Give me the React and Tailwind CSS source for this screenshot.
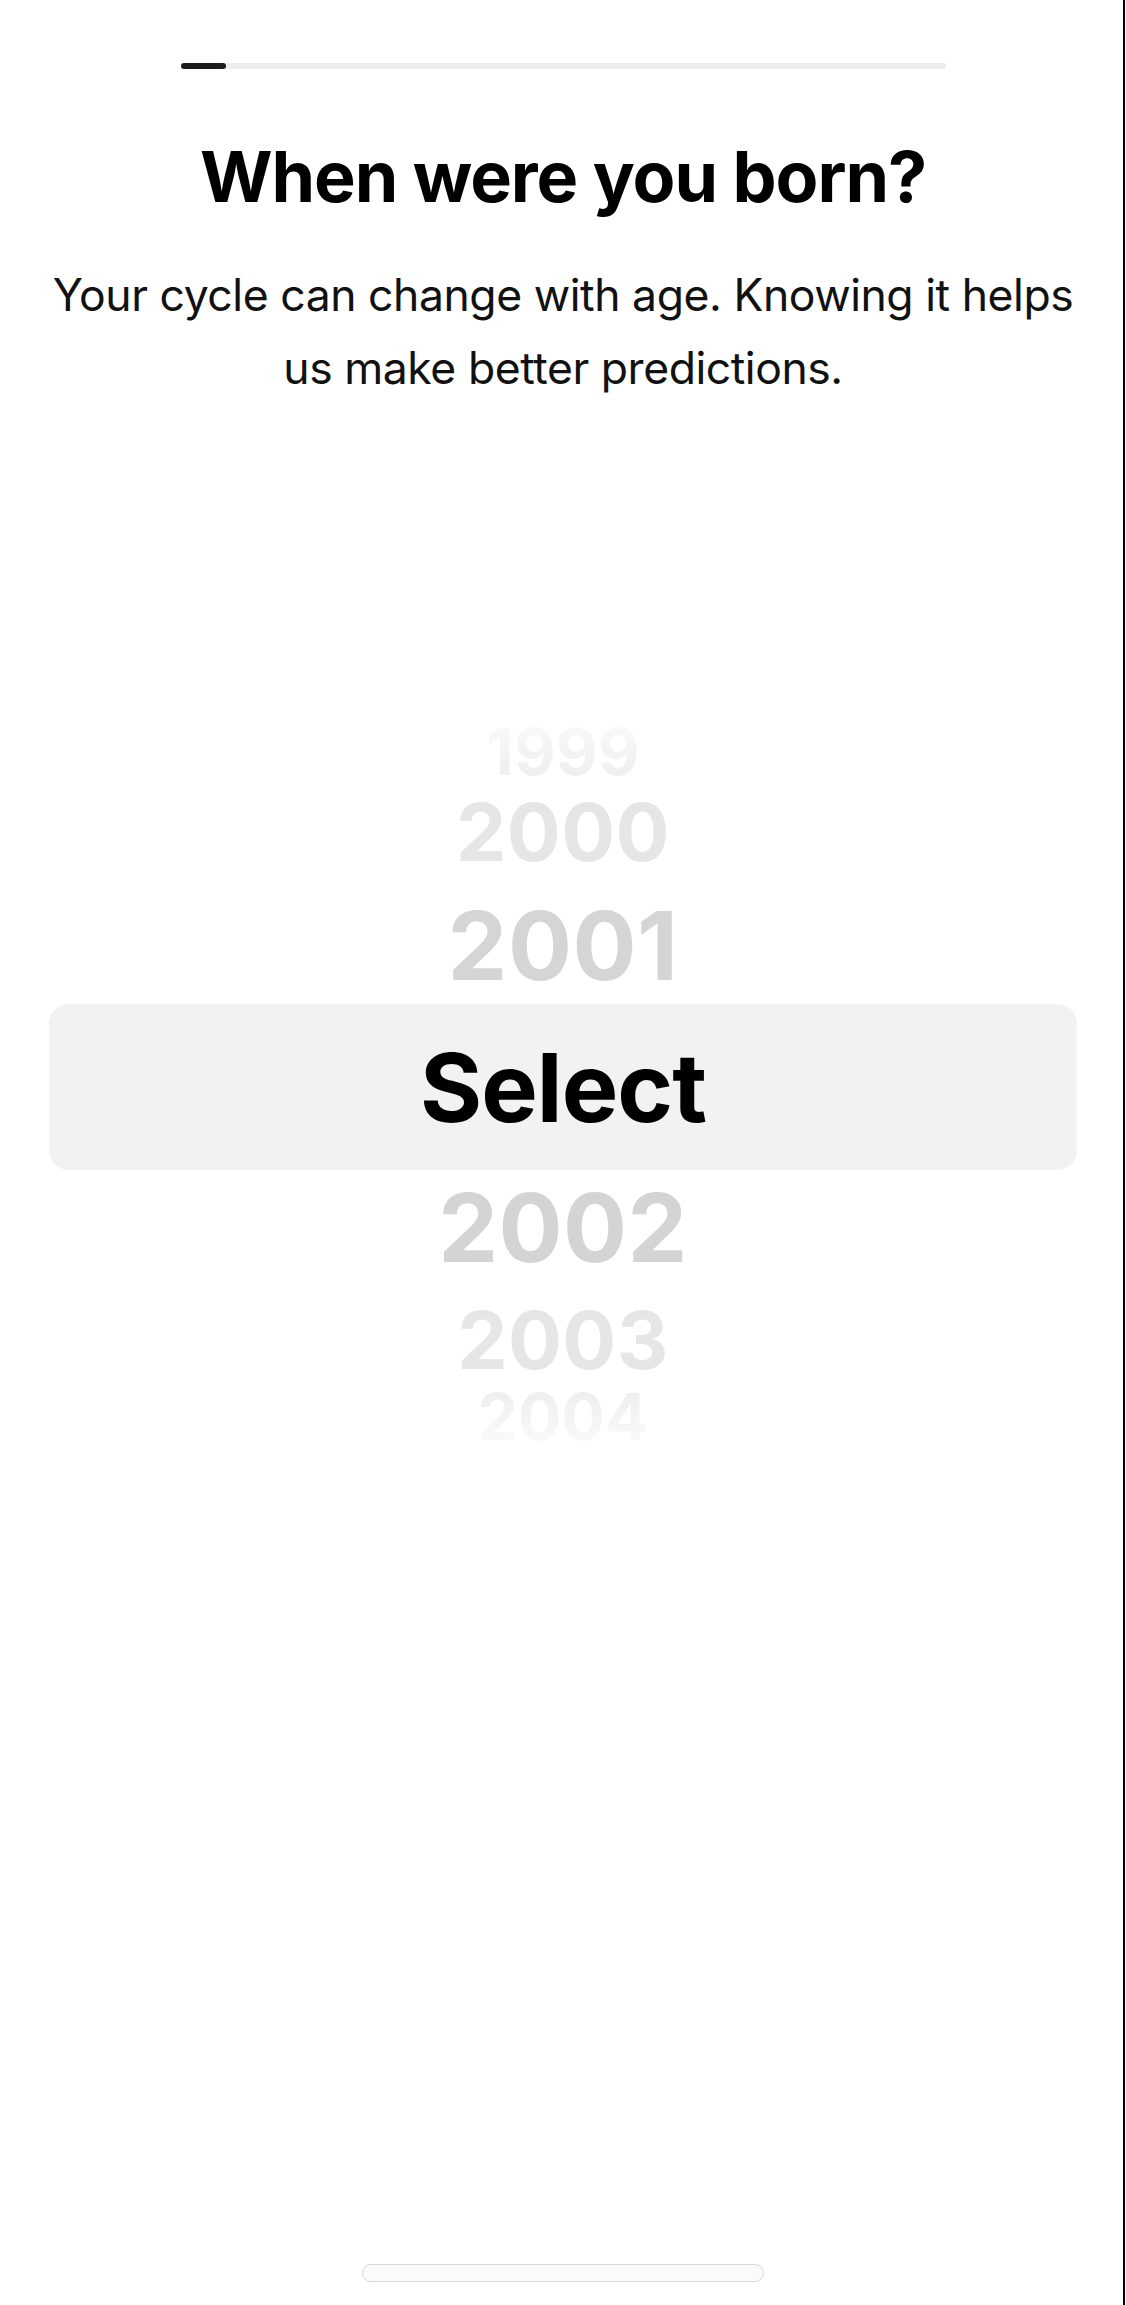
import React from 'react';

// Year wheel: rows above and below the highlighted "Select" row
const above = [
    { year: '1999', size: 'text-[64px]', color: 'bg-gradient-to-b from-[#fafafa] to-[#ededef] bg-clip-text text-transparent', mt: 'mt-0' },
    { year: '2000', size: 'text-[80px]', color: 'text-[#e6e6e8]', mt: 'mt-[8px]' },
    { year: '2001', size: 'text-[95px]', color: 'text-[#d5d5d8]', mt: 'mt-[26px]' },
];

const below = [
    { year: '2002', size: 'text-[95px]', color: 'text-[#d4d4d6]', mt: 'mt-[10px]' },
    { year: '2003', size: 'text-[80px]', color: 'text-[#e6e6e8]', mt: 'mt-[25px]' },
    { year: '2004', size: 'text-[64px]', color: 'bg-gradient-to-b from-[#ededef] to-[#fbfbfb] bg-clip-text text-transparent', mt: 'mt-[5px]' },
];

const YearRow = ({ year, size, color, mt }) => (
    <div className={`${mt} ${size} ${color} leading-none font-bold text-center tracking-[0.005em]`}>
        {year}
    </div>
);

const App = () => {
    return (
        <div className="relative min-h-[2305px] w-full bg-white flex flex-col font-['Inter','Noto_Sans',sans-serif] text-black">
            {/* Thin frame line on the right edge */}
            <div className="absolute top-0 bottom-0 right-[1px] w-[2px] bg-black" />

            {/* Progress bar */}
            <div className="pt-[63px] flex justify-center">
                <div className="w-[765px] h-[6px] rounded-full bg-[#ececee] flex">
                    <div className="w-[45px] h-[6px] rounded-full bg-[#1c1c1e]" />
                </div>
            </div>

            {/* Heading */}
            <h1 className="mt-[66px] text-center text-[70px] leading-[84px] font-bold tracking-[-0.015em]">
                When were you born?
            </h1>
            <p className="mt-[40px] mx-auto w-[1060px] text-center text-[44.5px] leading-[73px] text-[#111111] tracking-[-0.01em]">
                Your cycle can change with age. Knowing it helps us make better predictions.
            </p>

            {/* Wheel picker */}
            <div className="mt-[315px] flex flex-col items-center">
                {above.map((row) => (
                    <YearRow key={row.year} {...row} />
                ))}

                <div className="mt-[11px] w-[1028px] h-[166px] rounded-[20px] bg-[#f2f2f4] flex items-center justify-center">
                    <span className="text-[95px] leading-none font-bold tracking-[-0.01em]">Select</span>
                </div>

                {below.map((row) => (
                    <YearRow key={row.year} {...row} />
                ))}
            </div>

            {/* Home indicator */}
            <div className="mt-auto pb-[23px] flex justify-center">
                <div className="w-[402px] h-[18px] rounded-full border border-[#d8d8da] bg-[#fbfbfb]" />
            </div>
        </div>
    );
};

export default App;
